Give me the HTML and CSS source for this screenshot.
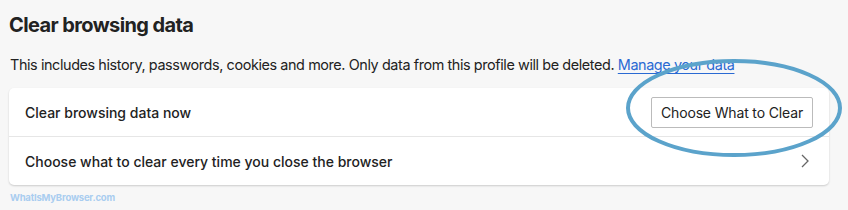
FILE: index.html
```html
<!DOCTYPE html>
<html lang="en">
<head>
  <meta charset="UTF-8" />
  <title>Clear browsing data</title>
  <link rel="stylesheet" href="styles.css">
</head>
<body>
  <h1>Clear browsing data</h1>

  <p class="intro">This includes history, passwords, cookies and more. Only data from this profile will be deleted. <a href="#">Manage your data</a></p>

  <!-- Settings card -->
  <div class="card">
    <div class="row">
      <span class="row-label">Clear browsing data now</span>
      <button class="choose-button">Choose What to Clear</button>
    </div>
    <div class="row">
      <span class="row-label">Choose what to clear every time you close the browser</span>
      <svg class="chevron" width="8" height="14" viewBox="0 0 8 14">
        <path d="M1 1 L7 7 L1 13" fill="none" stroke="#666" stroke-width="1.3"/>
      </svg>
    </div>
  </div>

  <div class="watermark">WhatIsMyBrowser.com</div>

  <!-- Highlight ring drawn over the button -->
  <svg class="ring" width="230" height="110" viewBox="0 0 230 110">
    <ellipse cx="115" cy="55" rx="106" ry="47" fill="none" stroke="#5ba3cb" stroke-width="4"/>
  </svg>
</body>
</html>
```

FILE: styles.css
```css
body {
  margin: 0;
  padding: 0 19px 0 9px;
  background: #f7f7f7;
  font-family: Inter, 'Noto Sans', sans-serif;
  color: #222;
  position: relative;
  height: 210px;
  overflow: hidden;
}

h1 {
  font-size: 20px;
  font-weight: 700;
  margin: 0;
  padding-top: 13px;
  line-height: 24px;
  letter-spacing: -0.6px;
}

.intro {
  font-size: 14.4px;
  margin: 18px 0 0 1px;
  line-height: 20px;
  letter-spacing: -0.4px;
  color: #222;
}

.intro a {
  color: #2a6ad3;
  text-decoration: underline;
  text-underline-offset: 3px;
}

.card {
  margin-top: 13px;
  background: #fff;
  border-radius: 5px;
  box-shadow: 0 1px 2px rgba(0, 0, 0, 0.18);
}

.row {
  display: flex;
  align-items: center;
  justify-content: space-between;
  height: 48px;
  padding: 0 16px;
}

.row + .row {
  border-top: 1px solid #e6e6e6;
}

.row-label {
  font-size: 14px;
  font-weight: 500;
}

.choose-button {
  font-family: inherit;
  font-size: 14px;
  letter-spacing: -0.15px;
  color: #222;
  background: #fff;
  border: 1px solid #bbb;
  border-radius: 2px;
  height: 31px;
  padding: 0 9px;
}

.chevron {
  margin-right: 4px;
}

.watermark {
  margin-top: 7px;
  font-size: 9.5px;
  font-weight: 700;
  letter-spacing: -0.2px;
  color: #a9cdf0;
  padding-left: 1px;
}

.ring {
  position: absolute;
  left: 619px;
  top: 53px;
}
```
